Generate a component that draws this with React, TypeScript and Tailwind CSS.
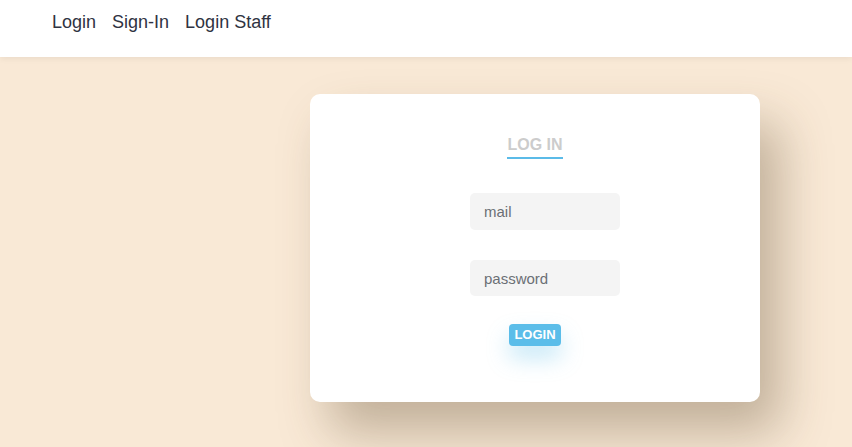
import React from 'react';

export default function App() {
  return (
    <div className="min-h-screen bg-[#f9e9d6] font-['Liberation_Sans',Arial,sans-serif]">
      {/* Header */}
      <header className="h-[57px] bg-white shadow-[0_2px_6px_rgba(0,0,0,0.06)]">
        <nav className="flex gap-4 pl-[52px] pt-[9px] text-[18px] text-[#2f3342]">
          <a href="#">Login</a>
          <a href="#">Sign-In</a>
          <a href="#">Login Staff</a>
        </nav>
      </header>

      {/* Login card */}
      <main className="pt-[37px] pl-[310px]">
        <div className="w-[450px] h-[308px] bg-white rounded-[10px] shadow-[20px_30px_50px_rgba(90,70,40,0.35)] flex flex-col items-center pt-[41px]">
          <h2 className="text-[16px] font-bold text-[#cccccc] border-b-2 border-[#5bbbe8] leading-[20px] pb-[2px]">
            LOG IN
          </h2>
          <input
            type="text"
            placeholder="mail"
            className="mt-[34px] ml-[20px] w-[150px] h-[37px] bg-[#f4f4f4] rounded-[5px] px-[14px] text-[15px] placeholder:text-[#6b6f75] outline-none"
          />
          <input
            type="password"
            placeholder="password"
            className="mt-[30px] ml-[20px] w-[150px] h-[36px] bg-[#f4f4f4] rounded-[5px] px-[14px] text-[15px] placeholder:text-[#6b6f75] outline-none"
          />
          <button className="mt-[28px] h-[22px] px-[5px] bg-[#5bbde9] text-white font-bold text-[13px] rounded-[4px] shadow-[0_12px_22px_rgba(91,189,233,0.35)]">
            LOGIN
          </button>
        </div>
      </main>
    </div>
  );
}
